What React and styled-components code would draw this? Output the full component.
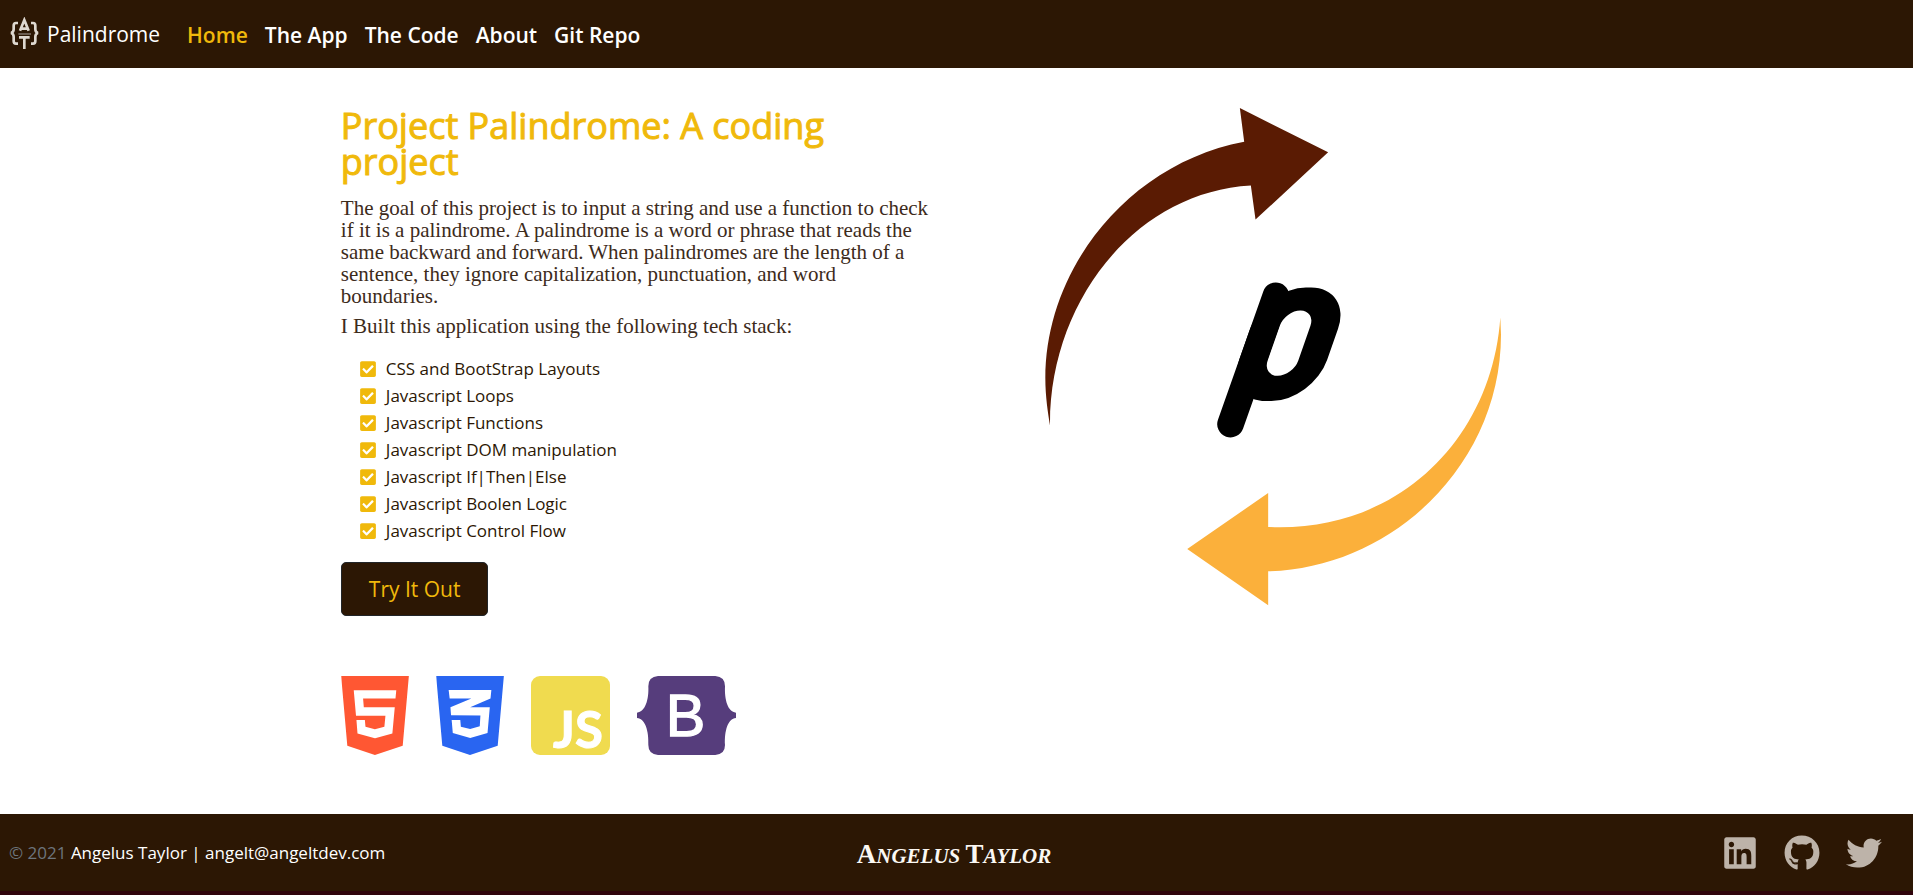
import React from "react";
import styled, { createGlobalStyle } from "styled-components";
import { FaHtml5, FaCss3Alt, FaLinkedin, FaGithub, FaTwitter, FaCheckSquare } from "react-icons/fa";

const brown = "#2c1704";
const gold = "#f0b90b";
const sans = `"Open Sans", "Noto Sans", sans-serif`;

const GlobalStyle = createGlobalStyle`
  *, *::before, *::after { box-sizing: border-box; }
  body {
    margin: 0;
    background: #fff;
    color: ${brown};
    font-family: ${sans};
    font-size: 17px;
    line-height: 27px;
  }
  #root { min-height: 100vh; display: flex; flex-direction: column; }
  a { color: inherit; text-decoration: none; }
`;

const Header = styled.header`
  display: flex;
  align-items: center;
  height: 68px;
  padding: 0 9px;
  background: ${brown};
  color: #fff;
`;

const Brand = styled.a`
  display: flex;
  align-items: center;
  gap: 7px;
  margin-right: 27px;
  font-size: 21px;

  svg { width: 31px; height: 34px; }
`;

const Nav = styled.nav`
  display: flex;
  gap: 17px;
  padding-top: 2px;
  font-size: 21px;
  font-weight: 600;
`;

const NavLink = styled.a`
  color: ${(p) => (p.$active ? gold : "#fff")};
`;

const Main = styled.main`
  flex: 1;
  display: flex;
  gap: 48px;
  width: 66.6667%;
  margin: 0 auto;
  padding: 40px 26px 40px 22px;
`;

const Column = styled.section`
  flex: 1 1 0;
  min-width: 0;
`;

const Title = styled.h1`
  margin: 0 0 17px;
  color: ${gold};
  font-size: 36px;
  font-weight: 400;
  line-height: 36px;
  -webkit-text-stroke: 1px ${gold};
`;

const Paragraph = styled.p`
  margin: 0 0 8px;
  color: #3d2b1b;
  font-family: "Liberation Serif", serif;
  font-size: 21px;
  line-height: 22px;
`;

const TechList = styled.ul`
  margin: 18px 0;
  padding: 0 0 0 18px;
  list-style: none;
`;

const TechItem = styled.li`
  display: flex;
  align-items: center;
  gap: 9px;

  svg { width: 18px; height: 18px; color: ${gold}; }
`;

const TryButton = styled.button`
  display: block;
  height: 54px;
  padding: 0 27px;
  border: 1px solid #212529;
  border-radius: 5px;
  background: ${brown};
  color: ${gold};
  font-family: inherit;
  font-size: 21px;
  line-height: 30px;
`;

const Logos = styled.div`
  display: flex;
  gap: 27px;
  margin-top: 60px;
`;

const Logo = styled.svg`
  display: block;
  width: ${(p) => p.$width}px;
  height: 79px;
`;

const Artwork = styled.svg`
  display: block;
  width: 456px;
  max-width: 100%;
  margin: 0 auto;
`;

const Footer = styled.footer`
  display: grid;
  grid-template-columns: 1fr auto 1fr;
  align-items: center;
  height: 81px;
  padding: 0 14px 0 9px;
  border-bottom: 4px solid #30040c;
  background: ${brown};
  color: #fff;
`;

const Muted = styled.span`
  color: #6c757d;
`;

const Signature = styled.a`
  padding-top: 6px;
  font-family: "Liberation Serif", serif;
  font-size: 21px;
  font-style: italic;
  font-weight: 700;
  color: #fbf8f3;
`;

const Initial = styled.span`
  font-size: 27px;
  font-style: normal;
`;

const Social = styled.div`
  display: flex;
  justify-content: flex-end;
  gap: 26px;
  padding-right: 17px;
  color: #bdb3a9;

  svg { display: block; width: 36px; height: 36px; }
`;

const navItems = ["Home", "The App", "The Code", "About", "Git Repo"];

const techStack = [
  "CSS and BootStrap Layouts",
  "Javascript Loops",
  "Javascript Functions",
  "Javascript DOM manipulation",
  "Javascript If|Then|Else",
  "Javascript Boolen Logic",
  "Javascript Control Flow",
];

function BrandMark() {
  return (
    <svg viewBox="0 0 93 102" fill="none" stroke="#ded8d0" aria-hidden="true">
      <g strokeWidth="8">
        <path d="M27 18h-6q-7 0-7 8v11q0 9-8 11q8 2 8 11v13q0 8 7 8h6" />
        <path d="M66 18h6q7 0 7 8v11q0 9 8 11q-8 2-8 11v13q0 8-7 8h-6" />
        <path d="M33 41L46 9l13 32M36 35h20" />
        <path d="M30 61h32M46 60v36" />
      </g>
      <path d="M28 51h38" stroke="#8b8077" strokeWidth="4" />
    </svg>
  );
}

function ShieldLogo({ icon: Icon, label, color }) {
  return (
    <Logo $width={68} viewBox="0 32 384 448" role="img" aria-label={label}>
      <Icon x="0" y="0" width="384" height="512" color={color} size="512" preserveAspectRatio="xMinYMin" />
    </Logo>
  );
}

function JsLogo() {
  return (
    <Logo $width={79} viewBox="0 0 79 79" role="img" aria-label="JavaScript">
      <rect width="79" height="79" rx="9" fill="#f0db4f" />
      <text x="22" y="72" fill="#fff" stroke="#fff" fontFamily="Lato, sans-serif" fontWeight="700" fontSize="51">JS</text>
    </Logo>
  );
}

function BootstrapLogo() {
  return (
    <Logo $width={99} viewBox="0 0 297 237" role="img" aria-label="Bootstrap">
      <path
        fill="#563d7c"
        d="M63 0H235Q264 2 264 31C262 70 272 108 297 110V126C272 128 262 166 264 207Q264 235 235 237H63Q34 235 34 207C36 166 25 128 0 126V110C25 108 36 70 34 31Q34 2 63 0Z"
      />
      <text x="86" y="180" fill="#fff" stroke="#fff" strokeWidth="4" fontFamily="Liberation Sans, sans-serif" fontSize="178">B</text>
    </Logo>
  );
}

function PalindromeArt() {
  return (
    <Artwork viewBox="48 39 1369 1494" role="img" aria-label="Palindrome">
      <path fill="#5a1b03" d="M633 39L898 172L680 374L666 272C315 292 60 625 63 992C57 955 49 905 49 850C49 520 300 205 646 140Z" />
      <path fill="#fbb03b" d="M475 1363L718 1195V1297C1110 1315 1390 1030 1415 668L1417 720C1417 1110 1090 1420 718 1430V1532Z" />
      <g transform="translate(780 747) skewX(-19.3)">
        <rect x="-132" y="-169" width="264" height="341" rx="124" />
        <rect x="-46" y="-100" width="92" height="196" rx="46" fill="#fff" />
      </g>
      <line x1="741" y1="603" x2="605" y2="988" stroke="#000" strokeWidth="80" strokeLinecap="round" />
    </Artwork>
  );
}

export default function App() {
  return (
    <>
      <GlobalStyle />
      <Header>
        <Brand href="#">
          <BrandMark />
          Palindrome
        </Brand>
        <Nav>
          {navItems.map((item, i) => (
            <NavLink key={item} href="#" $active={i === 0}>{item}</NavLink>
          ))}
        </Nav>
      </Header>
      <Main>
        <Column>
          <Title>Project Palindrome: A coding project</Title>
          <Paragraph>
            The goal of this project is to input a string and use a function to check if it is a
            palindrome. A palindrome is a word or phrase that reads the same backward and forward.
            When palindromes are the length of a sentence, they ignore capitalization, punctuation,
            and word boundaries.
          </Paragraph>
          <Paragraph>I Built this application using the following tech stack:</Paragraph>
          <TechList>
            {techStack.map((item) => (
              <TechItem key={item}><FaCheckSquare />{item}</TechItem>
            ))}
          </TechList>
          <TryButton type="button">Try It Out</TryButton>
          <Logos>
            <ShieldLogo icon={FaHtml5} label="HTML5" color="#ff5733" />
            <ShieldLogo icon={FaCss3Alt} label="CSS3" color="#2965f1" />
            <JsLogo />
            <BootstrapLogo />
          </Logos>
        </Column>
        <Column>
          <PalindromeArt />
        </Column>
      </Main>
      <Footer>
        <div>
          <Muted>© 2021</Muted> <a href="#">Angelus Taylor | angelt@angeltdev.com</a>
        </div>
        <Signature href="#">
          <Initial>A</Initial>NGELUS <Initial>T</Initial>AYLOR
        </Signature>
        <Social>
          <a href="#" aria-label="LinkedIn"><FaLinkedin /></a>
          <a href="#" aria-label="GitHub"><FaGithub /></a>
          <a href="#" aria-label="Twitter"><FaTwitter /></a>
        </Social>
      </Footer>
    </>
  );
}
